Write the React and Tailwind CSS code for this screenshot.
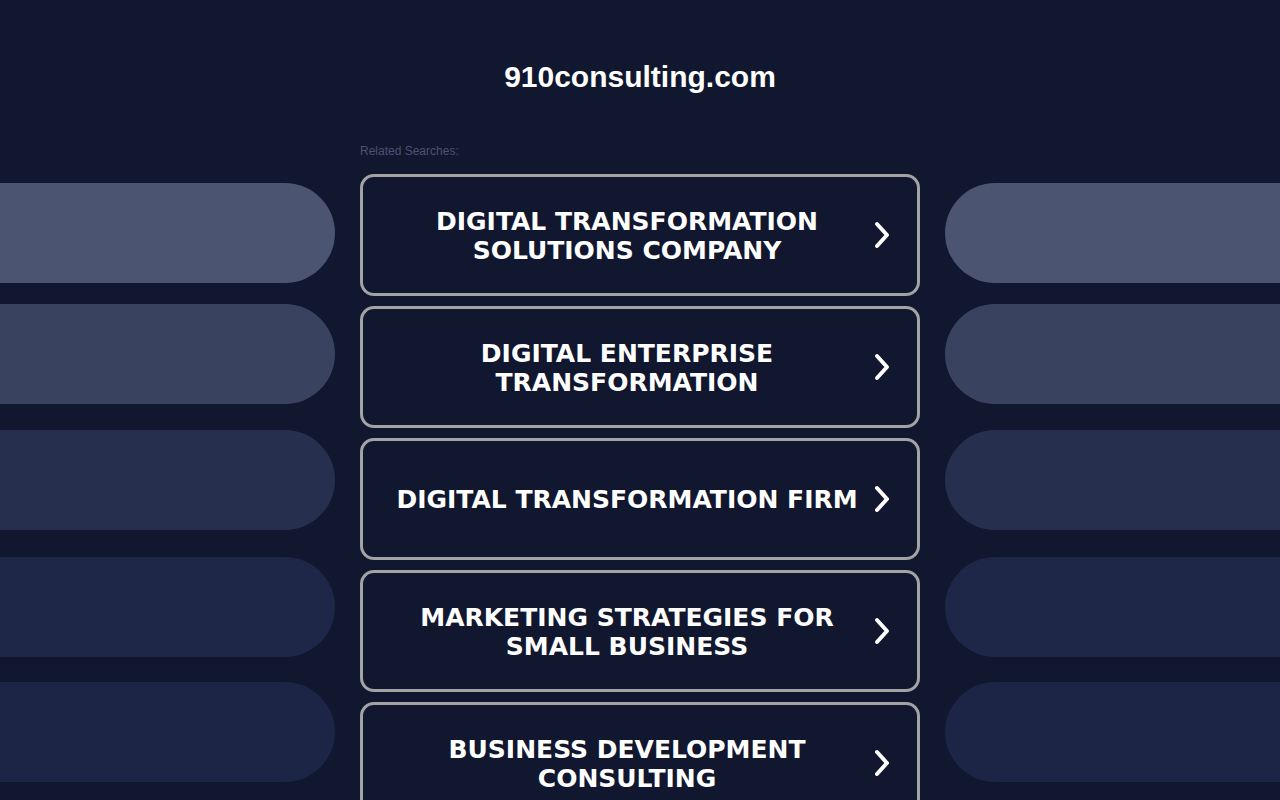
const searches = [
  ["DIGITAL TRANSFORMATION", "SOLUTIONS COMPANY"],
  ["DIGITAL ENTERPRISE", "TRANSFORMATION"],
  ["DIGITAL TRANSFORMATION FIRM"],
  ["MARKETING STRATEGIES FOR", "SMALL BUSINESS"],
  ["BUSINESS DEVELOPMENT", "CONSULTING"],
];

const pills = [
  { color: "bg-[#4b5572]", mt: "mt-0" },
  { color: "bg-[#394360]", mt: "mt-[21px]" },
  { color: "bg-[#262f4e]", mt: "mt-[26px]" },
  { color: "bg-[#1e2747]", mt: "mt-[27px]" },
  { color: "bg-[#1c2545]", mt: "mt-[25px]" },
];

function Chevron() {
  return (
    <svg width="22" height="30" viewBox="0 0 22 30" fill="none">
      <path
        d="M6 4 L16 15 L6 26"
        stroke="white"
        strokeWidth="4"
        strokeLinecap="round"
        strokeLinejoin="round"
      />
    </svg>
  );
}

function SearchItem({ lines }) {
  return (
    <a
      href="#"
      className="flex items-center h-[122px] mb-[10px] border-[3px] border-[#a3a3a6] rounded-[14px] pl-[20px] pr-[24px]"
    >
      <div className="flex-1 pt-[1px] text-center text-white font-bold text-[25px] leading-[29px] font-['DejaVu_Sans',Verdana,sans-serif]">
        {lines.map((l) => (
          <div key={l}>{l}</div>
        ))}
      </div>
      <div className="w-[22px] flex justify-center">
        <Chevron />
      </div>
    </a>
  );
}

function SidePills({ side }) {
  return (
    <div className="w-[335px] shrink-0 pt-[183px] flex flex-col">
      {pills.map((p, i) => (
        <div
          key={i}
          className={`h-[100px] ${p.color} ${p.mt} ${
            side === "left" ? "rounded-r-[50px]" : "rounded-l-[50px]"
          }`}
        />
      ))}
    </div>
  );
}

export default function App() {
  return (
    <div className="h-screen overflow-hidden bg-[#11172e] flex font-['Liberation_Sans',Arial,sans-serif]">
      <SidePills side="left" />
      <div className="w-[560px] shrink-0 mx-[25px]">
        <h1 className="pt-[59px] text-center text-white font-bold text-[30px] leading-[36px]">
          910consulting.com
        </h1>
        <p className="mt-[48px] mb-[15px] text-[12px] leading-[16px] text-[#4a5470]">
          Related Searches:
        </p>
        {searches.map((lines, i) => (
          <SearchItem key={i} lines={lines} />
        ))}
      </div>
      <SidePills side="right" />
    </div>
  );
}
